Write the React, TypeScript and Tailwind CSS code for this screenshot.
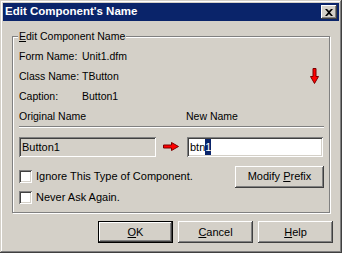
import React from 'react'

const raised =
  'shadow-[inset_-1px_-1px_#404040,inset_1px_1px_#ffffff,inset_-2px_-2px_#808080,inset_2px_2px_#d4d0c8]'
const sunken =
  'shadow-[inset_1px_1px_#808080,inset_-1px_-1px_#ffffff,inset_2px_2px_#404040,inset_-2px_-2px_#d4d0c8]'

function Btn({ children, def = false, className = '' }: { children: React.ReactNode; def?: boolean; className?: string }) {
  return (
    <button
      className={
        'h-[22px] text-[11px] bg-[#d4d0c8] flex items-center justify-center ' +
        (def ? 'border border-black ' : '') +
        className
      }
    >
      <span className={'w-full h-full flex items-center justify-center ' + raised}>{children}</span>
    </button>
  )
}

function Check({ label }: { label: string }) {
  return (
    <label className="flex items-center gap-[4px] text-[11px]">
      <span className={'w-[13px] h-[13px] bg-white ' + sunken} />
      {label}
    </label>
  )
}

function DownArrow() {
  return (
    <svg width="9" height="16" viewBox="0 0 9 16">
      <path d="M3 0.5h3v8h2.5L4.5 15.5 0.5 8.5H3z" fill="#ff0000" stroke="#7a0000" strokeWidth="1" />
    </svg>
  )
}

function RightArrow() {
  return (
    <svg width="16" height="9" viewBox="0 0 16 9">
      <path d="M0.5 3h8V0.5l7 4-7 4V6h-8z" fill="#ff0000" stroke="#7a0000" strokeWidth="1" />
    </svg>
  )
}

export default function App() {
  return (
    <div
      className={
        "w-[342px] h-[253px] bg-[#d4d0c8] p-[3px] flex flex-col text-black font-['Liberation_Sans',Arial,sans-serif] " +
        'shadow-[inset_-1px_-1px_#404040,inset_1px_1px_#d4d0c8,inset_-2px_-2px_#808080,inset_2px_2px_#ffffff]'
      }
    >
      {/* title bar */}
      <div className="h-[18px] bg-[#0a246a] flex items-center justify-between pl-[2px] pr-[2px]">
        <span className="text-white font-bold text-[11.5px] leading-none">Edit Component's Name</span>
        <span className={'w-[16px] h-[14px] bg-[#d4d0c8] flex items-center justify-center ' + raised}>
          <svg width="8" height="7" viewBox="0 0 8 7">
            <path d="M0 0h2l2 2 2-2h2L5 3.5 8 7H6L4 5 2 7H0l3-3.5z" fill="#000" />
          </svg>
        </span>
      </div>

      {/* group box */}
      <div className="mt-[15px] ml-[9px] w-[318px] h-[177px] relative border border-[#808080] shadow-[inset_1px_1px_#ffffff,1px_1px_#ffffff] pl-[6px] pr-[5px] pt-[10px]">
        <span className="absolute -top-[7px] left-[5px] px-[1px] bg-[#d4d0c8] text-[10.5px] leading-[13px]">
          <span className="underline">E</span>dit Component Name
        </span>

        <div className="text-[10.5px]">
          <div className="h-[20px] flex items-center">
            <span className="w-[63px]">Form Name:</span>
            <span>Unit1.dfm</span>
          </div>
          <div className="h-[20px] flex items-center justify-between">
            <div className="flex items-center">
              <span className="w-[63px]">Class Name:</span>
              <span>TButton</span>
            </div>
            <span className="mr-[5px] mb-[3px]">
              <DownArrow />
            </span>
          </div>
          <div className="h-[20px] flex items-center">
            <span className="w-[63px]">Caption:</span>
            <span>Button1</span>
          </div>
          <div className="h-[19px] flex items-center">
            <span className="w-[167px]">Original Name</span>
            <span>New Name</span>
          </div>
        </div>
        <div className="h-[2px] border-t border-[#808080] border-b border-b-white" />

        <div className="mt-[9px] flex items-center">
          <div className={'w-[137px] h-[20px] bg-[#d4d0c8] px-[3px] flex items-center text-[11px] ' + sunken}>Button1</div>
          <span className="ml-[7px] mr-[8px] mt-[-1px]">
            <RightArrow />
          </span>
          <div className={'w-[136px] h-[20px] bg-white px-[3px] flex items-center text-[11px] ' + sunken}>
            btn<span className="bg-[#0a246a] text-white">1</span>
          </div>
        </div>

        <div className="mt-[9px] h-[21px] flex items-center justify-between">
          <Check label="Ignore This Type of Component." />
          <Btn className="w-[89px] h-[21px]">
            Modify&nbsp;<span className="underline">P</span>refix
          </Btn>
        </div>
        <div className="h-[20px] flex items-center">
          <Check label="Never Ask Again." />
        </div>
      </div>

      {/* bottom buttons */}
      <div className="mt-[8px] pr-[6px] flex justify-end gap-[5px]">
        <Btn def className="w-[75px]">
          <span className="underline">O</span>K
        </Btn>
        <Btn className="w-[75px]">
          <span className="underline">C</span>ancel
        </Btn>
        <Btn className="w-[75px]">
          <span className="underline">H</span>elp
        </Btn>
      </div>
    </div>
  )
}
